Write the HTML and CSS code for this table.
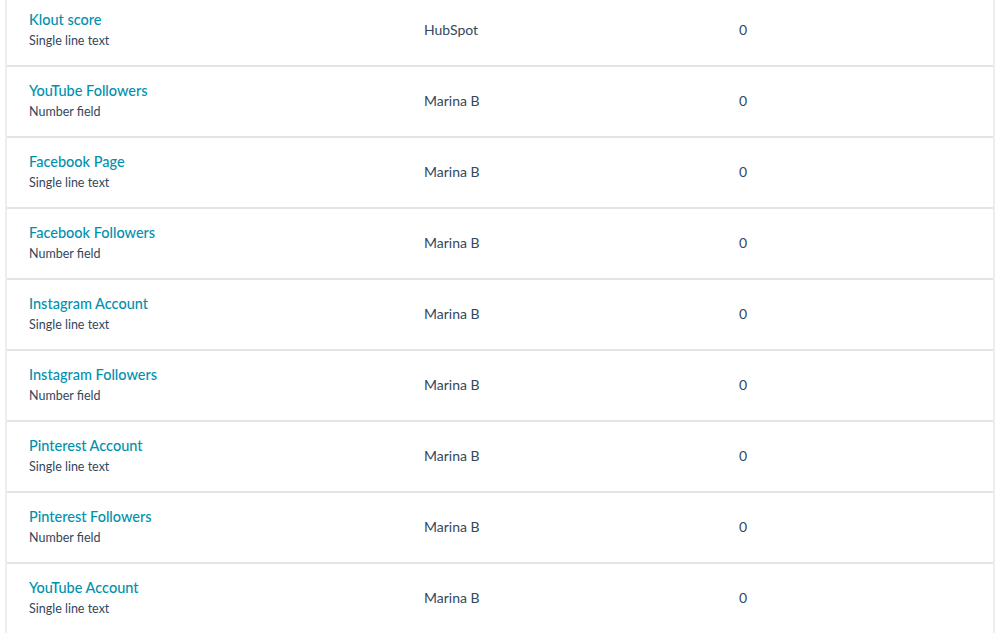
FILE: index.html
```html
<!DOCTYPE html>
<html>
<head>
<meta charset="utf-8">
<link rel="stylesheet" href="styles.css">
</head>
<body>
<div class="table">
  <div class="row"><div class="name"><div class="title">Klout score</div><div class="type">Single line text</div></div><div class="by">HubSpot</div><div class="count">0</div></div>
  <div class="row"><div class="name"><div class="title">YouTube Followers</div><div class="type">Number field</div></div><div class="by">Marina B</div><div class="count">0</div></div>
  <div class="row"><div class="name"><div class="title">Facebook Page</div><div class="type">Single line text</div></div><div class="by">Marina B</div><div class="count">0</div></div>
  <div class="row"><div class="name"><div class="title">Facebook Followers</div><div class="type">Number field</div></div><div class="by">Marina B</div><div class="count">0</div></div>
  <div class="row"><div class="name"><div class="title">Instagram Account</div><div class="type">Single line text</div></div><div class="by">Marina B</div><div class="count">0</div></div>
  <div class="row"><div class="name"><div class="title">Instagram Followers</div><div class="type">Number field</div></div><div class="by">Marina B</div><div class="count">0</div></div>
  <div class="row"><div class="name"><div class="title">Pinterest Account</div><div class="type">Single line text</div></div><div class="by">Marina B</div><div class="count">0</div></div>
  <div class="row"><div class="name"><div class="title">Pinterest Followers</div><div class="type">Number field</div></div><div class="by">Marina B</div><div class="count">0</div></div>
  <div class="row"><div class="name"><div class="title">YouTube Account</div><div class="type">Single line text</div></div><div class="by">Marina B</div><div class="count">0</div></div>
</div>
</body>
</html>
```
FILE: styles.css
```css
html, body {
  margin: 0;
  padding: 0;
  background: #ffffff;
  overflow: hidden;
}
body {
  font-family: Lato, "Liberation Sans", sans-serif;
  color: #33475b;
}
.table {
  margin: -4px 0 0 5px;
  width: 986px;
  border-left: 2px solid #eeeeee;
  border-right: 2px solid #eeeeee;
}
.row {
  display: grid;
  grid-template-columns: 417px 315px 1fr;
  align-items: center;
  height: 69px;
  border-bottom: 2px solid #e4e4e4;
}
.name {
  padding-left: 22px;
  padding-bottom: 2px;
}
.title {
  color: #0091ae;
  font-size: 14.5px;
  line-height: 21px;
  font-weight: 500;
}
.type {
  font-size: 12.5px;
  line-height: 21px;
}
.by, .count {
  font-size: 14px;
  padding-bottom: 3px;
}
```
